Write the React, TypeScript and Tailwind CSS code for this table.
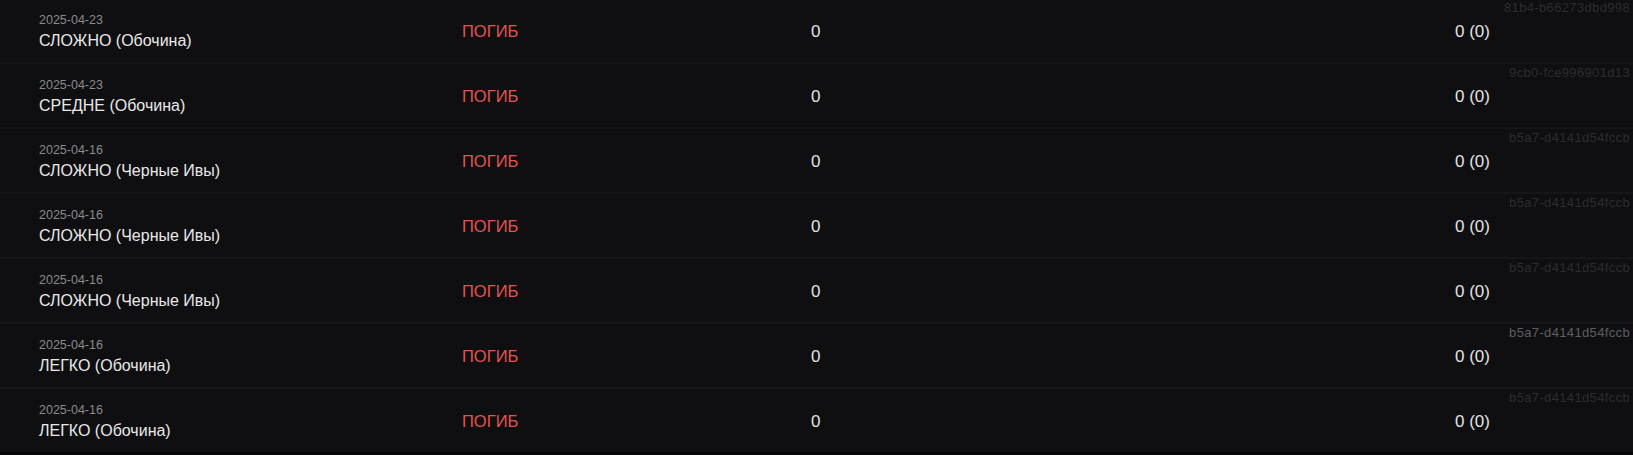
type Run = {
    date: string;
    title: string;
    hash: string;
    hashTone: "dim" | "bright";
};

const runs: Run[] = [
    { date: "2025-04-23", title: "СЛОЖНО (Обочина)", hash: "81b4-b66273dbd998", hashTone: "dim" },
    { date: "2025-04-23", title: "СРЕДНЕ (Обочина)", hash: "9cb0-fce996901d13", hashTone: "dim" },
    { date: "2025-04-16", title: "СЛОЖНО (Черные Ивы)", hash: "b5a7-d4141d54fccb", hashTone: "dim" },
    { date: "2025-04-16", title: "СЛОЖНО (Черные Ивы)", hash: "b5a7-d4141d54fccb", hashTone: "dim" },
    { date: "2025-04-16", title: "СЛОЖНО (Черные Ивы)", hash: "b5a7-d4141d54fccb", hashTone: "dim" },
    { date: "2025-04-16", title: "ЛЕГКО (Обочина)", hash: "b5a7-d4141d54fccb", hashTone: "bright" },
    { date: "2025-04-16", title: "ЛЕГКО (Обочина)", hash: "b5a7-d4141d54fccb", hashTone: "dim" },
];

const RunRow = ({ run, last }: { run: Run; last: boolean }) => {
    return (
        <div
            className={`grid grid-cols-[423px_349px_644px_47px_1fr] h-[65px] pl-[39px] pr-[3px] border-b-2 ${
                last ? "border-[#060608]" : "border-[#161619]"
            }`}
        >
            <div className="flex flex-col justify-center pt-[2px]">
                <span className="text-[12.5px] leading-[17px] text-[#8a8a8c]">{run.date}</span>
                <span className="text-[16px] leading-[20px] text-[#e8e8e8] mt-[2px] whitespace-nowrap">{run.title}</span>
            </div>
            <div className="flex items-center pt-[2px] text-[16.5px] text-[#e4544f]">ПОГИБ</div>
            <div className="flex items-center pt-[2px] text-[17px] text-[#e2e2e2]">0</div>
            <div className="flex items-center pt-[2px] text-[17px] text-[#e2e2e2] whitespace-nowrap">0 (0)</div>
            <div
                className={`self-start text-right pt-[1px] text-[13px] leading-[15px] tracking-[0.35px] whitespace-nowrap overflow-hidden ${
                    run.hashTone === "bright" ? "text-[#5e5e60]" : "text-[#2c2c2f]"
                }`}
            >
                {run.hash}
            </div>
        </div>
    );
};

export default function App() {
    return (
        <div
            className="w-[1633px] h-[455px] overflow-hidden bg-[#060608]"
            style={{ fontFamily: '"Liberation Sans", Arial, sans-serif' }}
        >
            <div className="-mt-[1px] bg-[#0f0f11]">
                {runs.map((run, i) => (
                    <RunRow key={i} run={run} last={i === runs.length - 1} />
                ))}
            </div>
        </div>
    );
}
